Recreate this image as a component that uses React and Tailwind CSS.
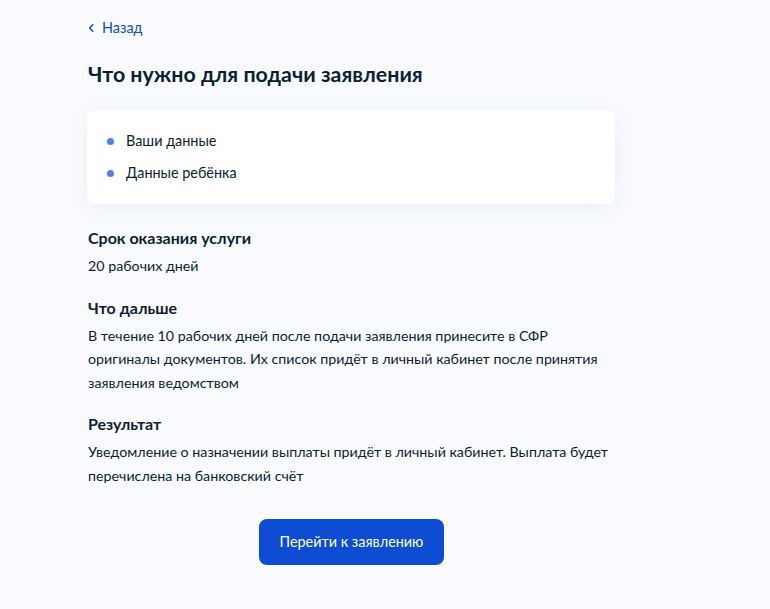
// Экран «Что нужно для подачи заявления»: список данных, срок, дальнейшие шаги, результат.
const NEEDED = ['Ваши данные', 'Данные ребёнка'];

const SECTIONS = [
  { title: 'Срок оказания услуги', text: '20 рабочих дней' },
  {
    title: 'Что дальше',
    text: 'В течение 10 рабочих дней после подачи заявления принесите в СФР оригиналы документов. Их список придёт в личный кабинет после принятия заявления ведомством',
  },
  {
    title: 'Результат',
    text: 'Уведомление о назначении выплаты придёт в личный кабинет. Выплата будет перечислена на банковский счёт',
  },
];

function Section({ title, text }) {
  return (
    <section className="flex flex-col gap-[4px]">
      <h2 className="text-[16px] font-bold leading-[24px] text-[#0b1f33]">{title}</h2>
      <p className="text-[14.25px] leading-[23.5px] text-[#0b1f33]">{text}</p>
    </section>
  );
}

export default function App() {
  return (
    <div className="min-h-screen bg-[#f9fbfe] font-['Lato','Noto_Sans',sans-serif] text-[#0b1f33]">
      <div className="flex w-[615px] flex-col pl-[88px] pt-[18px]">
        <a href="#" className="flex items-center gap-[7px] text-[14.4px] leading-[20px] text-[#0d4cd3]">
          <svg width="7" height="10" viewBox="0 0 7 10" fill="none" aria-hidden="true">
            <path d="M4.8 1.8 1.6 5l3.2 3.2" stroke="currentColor" strokeWidth="1.5" strokeLinecap="round" strokeLinejoin="round" />
          </svg>
          Назад
        </a>

        <h1 className="mt-[22px] text-[21.4px] font-bold leading-[28px]">Что нужно для подачи заявления</h1>

        {/* карточка со списком */}
        <ul className="-ml-[1px] mt-[22px] flex flex-col gap-[8px] rounded-[8px] bg-white px-[20px] py-[19px] shadow-[0_4px_24px_rgba(47,85,150,0.08)]">
          {NEEDED.map((item) => (
            <li key={item} className="flex items-center gap-[12px] text-[14.4px] leading-[24px]">
              <span className="h-[7px] w-[7px] shrink-0 rounded-full bg-[#4b83e6]" />
              {item}
            </li>
          ))}
        </ul>

        <div className="mt-[22px] flex flex-col gap-[18px]">
          {SECTIONS.map((s) => (
            <Section key={s.title} {...s} />
          ))}
        </div>

        <div className="mt-[32px] flex justify-center">
          <button className="h-[46px] w-[185px] rounded-[8px] bg-[#0d4cd3] text-[14.4px] text-white">
            Перейти к заявлению
          </button>
        </div>
      </div>
    </div>
  );
}
